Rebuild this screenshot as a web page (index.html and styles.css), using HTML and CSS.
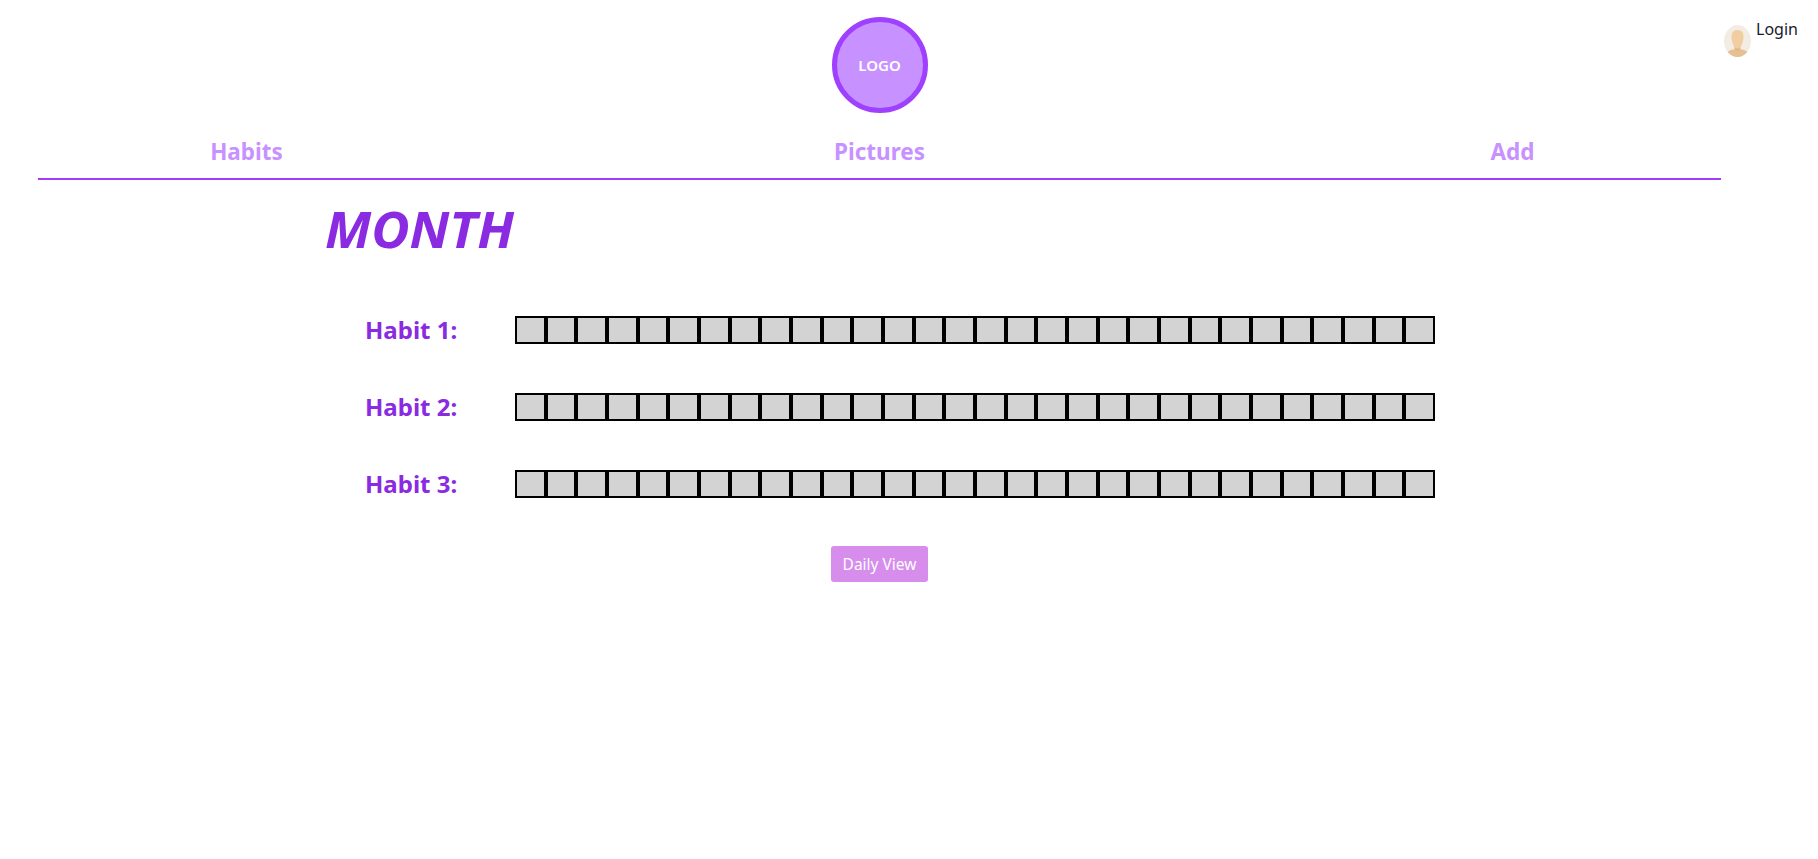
FILE: index.html
```html
<!DOCTYPE html>
<html lang="en">
	<head>
		<meta charset="utf-8">
		<title>Habits</title>
		<link rel="stylesheet" href="styles.css">
	</head>
	<body>
		<div class="pagina">
			<div class="principal">
				<header>
					<div class="logo">LOGO</div>
				</header>
				<nav class="menu">
					<a href="#">Habits</a>
					<a href="#">Pictures</a>
					<a href="#">Add</a>
				</nav>
				<h1 class="mes">MONTH</h1>
				<div id="habitos"></div>
				<div class="acoes">
					<button class="botao">Daily View</button>
				</div>
			</div>
			<a class="login" href="#">
				<svg class="avatar" viewBox="0 0 27 32" width="27" height="32">
					<defs>
						<clipPath id="oval"><ellipse cx="13.5" cy="16" rx="13.5" ry="16"/></clipPath>
					</defs>
					<g clip-path="url(#oval)">
						<rect width="27" height="32" fill="#f3ece2"/>
						<path d="M3 32 V28 Q4 25.5 9 24.5 L18 24.5 Q23 25.5 24 28 V32 Z" fill="#e6bf92"/>
						<path d="M10.5 20 h6 v5 q-3 2.500 -6 0 Z" fill="#e2b98a"/>
						<path d="M13.500 5 C18 5 19.500 8 19.500 12 C19.500 18 16 23.500 13.500 23.500 C11 23.500 7.500 18 7.500 12 C7.500 8 9 5 13.500 5 Z" fill="#f0cea0"/>
					</g>
				</svg>
				<span>Login</span>
			</a>
		</div>

		<script type="text/javascript">
			// monta as linhas de habitos, 30 quadrados em cada
			var habitos = document.getElementById("habitos");

			for (var i = 1; i <= 3; i++) {
				var linha = "<div class='habito'><span class='nome'>Habit " + i + ":</span><div class='quadros'>";
				for (var x = 0; x < 30; x++) {
					linha += "<div class='quadro'></div>";
				}
				linha += "</div></div>";
				habitos.innerHTML += linha;
			}
		</script>
	</body>
</html>
```
FILE: styles.css
```css
* {
	margin: 0;
	padding: 0;
	box-sizing: border-box;
}

body {
	font-family: "Noto Sans", "Open Sans", sans-serif;
	background-color: #fff;
}

a {
	text-decoration: none;
}

.pagina {
	display: flex;
	align-items: flex-start;
	padding-left: 38px;
}

.principal {
	width: 1683px;
}

header {
	display: flex;
	justify-content: center;
	padding-top: 17px;
}

.logo {
	width: 96px;
	height: 96px;
	border: 5px solid #a040ff;
	border-radius: 50%;
	background-color: #c792ff;
	color: #fff;
	font-size: 15px;
	font-weight: 600;
	display: flex;
	align-items: center;
	justify-content: center;
}

.menu {
	display: grid;
	grid-template-columns: repeat(3, 400px);
	column-gap: 233px;
	justify-content: center;
	text-align: center;
	margin-top: 22px;
	padding-bottom: 9px;
	border-bottom: 2px solid #a33bf8;
}

.menu a {
	color: #c792ff;
	font-size: 22.5px;
	font-weight: 700;
	line-height: 34px;
}

.mes {
	color: #8a2be2;
	font-size: 50px;
	font-weight: 700;
	font-style: italic;
	line-height: 68px;
	margin-top: 15px;
	padding-left: 287px;
	transform: scaleX(1.05);
	transform-origin: 287px 0;
}

#habitos {
	margin-top: 50px;
	padding-left: 327px;
}

.habito {
	display: flex;
	align-items: center;
	margin-bottom: 44px;
}

.nome {
	width: 150px;
	color: #8a2be2;
	font-size: 24px;
	font-weight: 700;
}

.quadros {
	display: flex;
	width: 920px;
}

.quadro {
	flex: 1;
	height: 28px;
	border: 2px solid #000;
	background-color: #d3d3d3;
}

.acoes {
	display: flex;
	justify-content: center;
	margin-top: 46px;
}

.botao {
	width: 97px;
	height: 36px;
	border: none;
	border-radius: 3px;
	background-color: #d68dec;
	color: #fff;
	font-family: inherit;
	font-size: 15.5px;
}

.login {
	display: flex;
	align-items: flex-start;
	margin-left: 3px;
	margin-top: 25px;
	color: #1a1a2e;
	font-size: 16px;
}

.login span {
	margin-left: 5px;
	margin-top: -7px;
}

.avatar {
	display: block;
}
```
